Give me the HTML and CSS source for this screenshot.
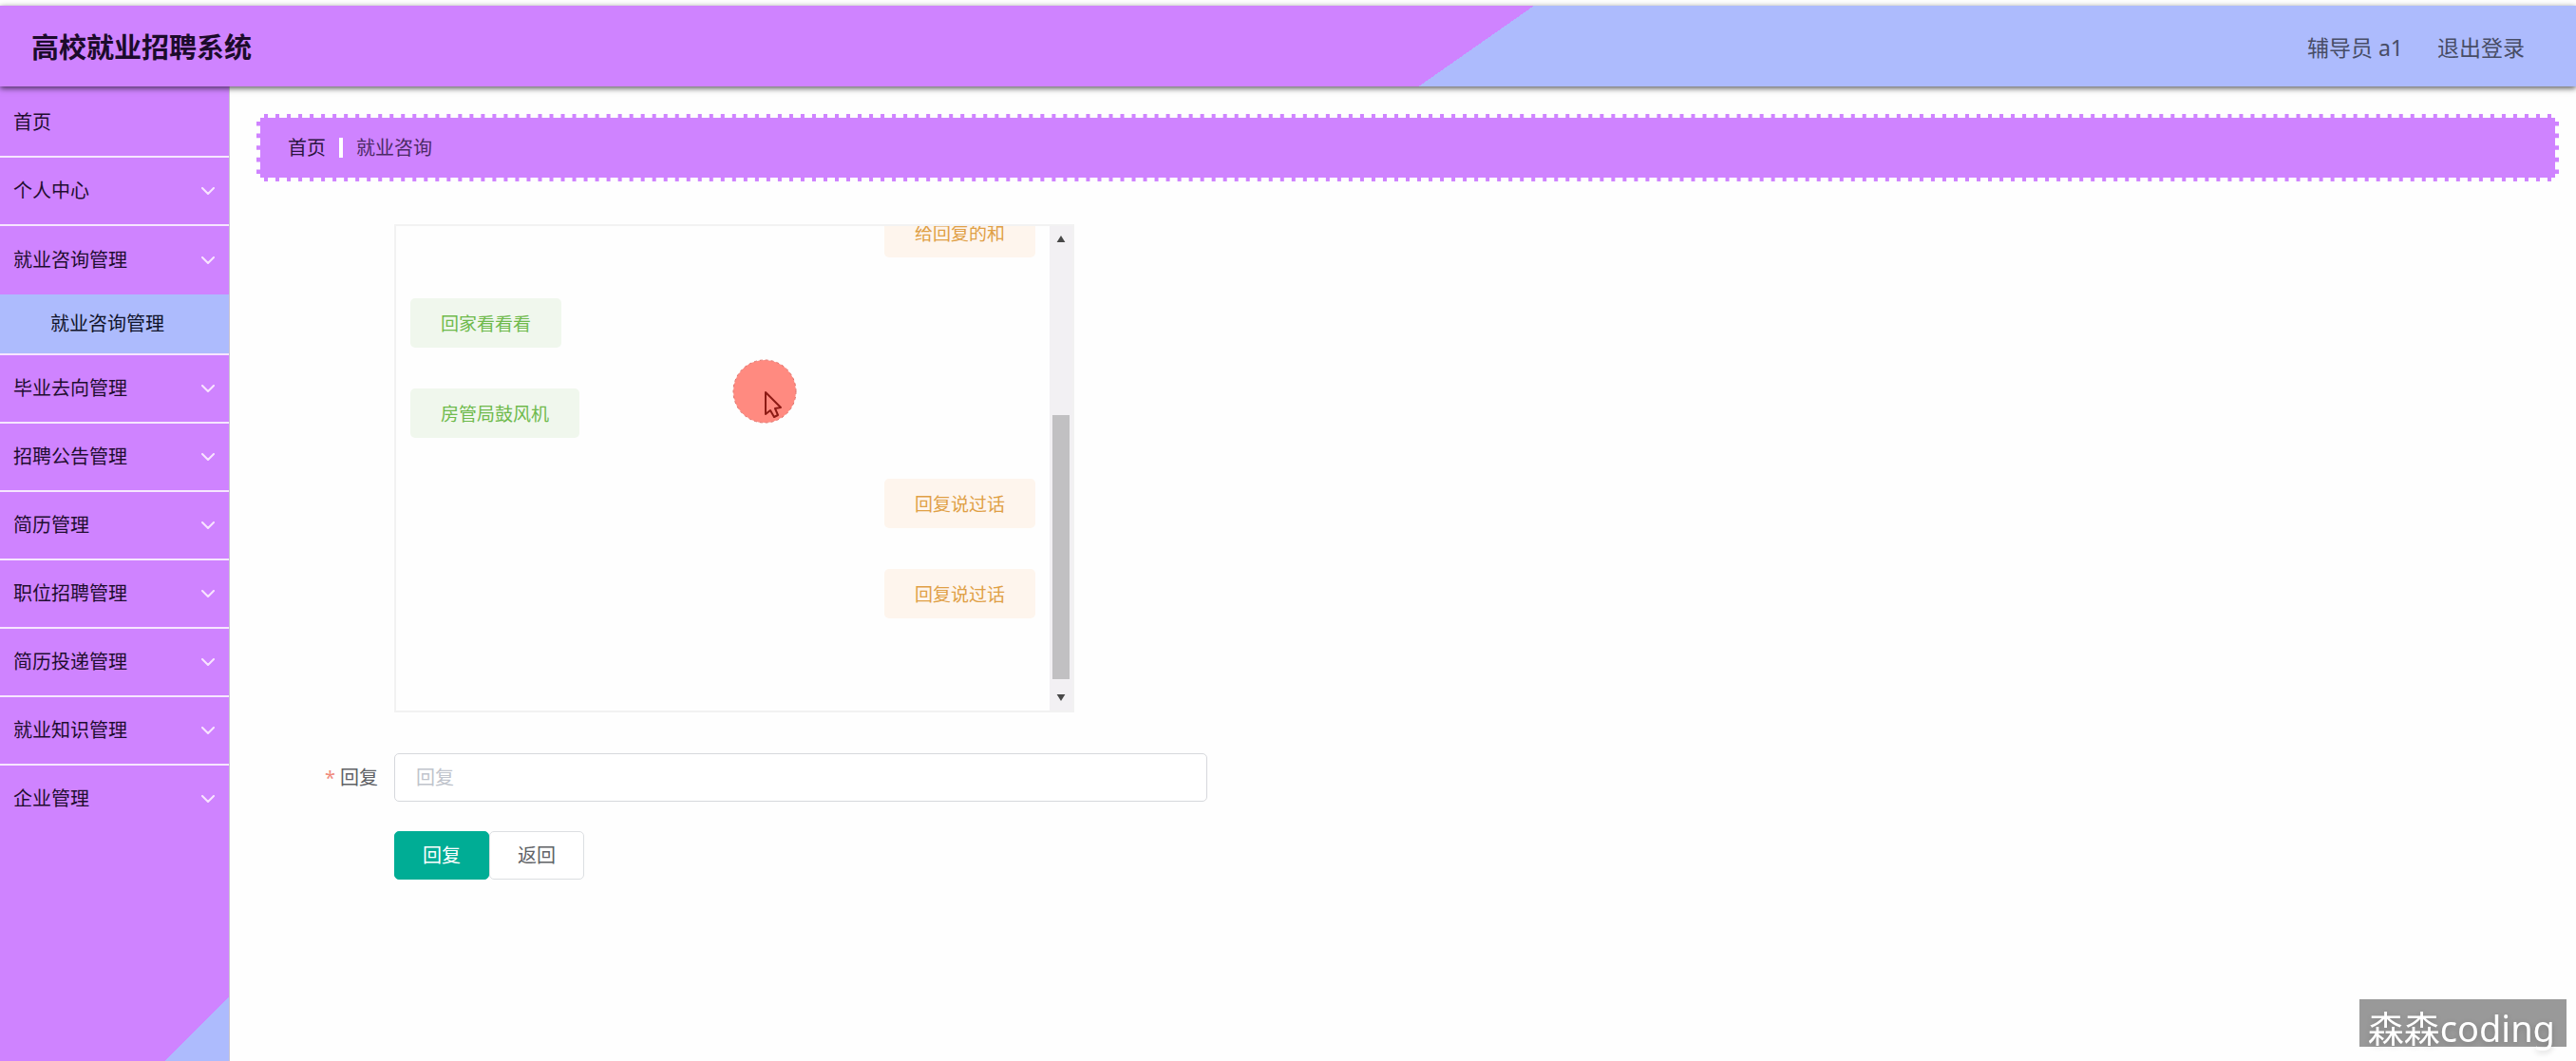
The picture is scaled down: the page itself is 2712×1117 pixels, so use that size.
FILE: index.html
```html
<!DOCTYPE html>
<html lang="zh-CN">
<head>
<meta charset="utf-8">
<meta name="viewport" content="width=device-width, initial-scale=1">
<title>高校就业招聘系统</title>
<link rel="stylesheet" href="styles.css">
</head>
<body>
<svg class="defs" aria-hidden="true">
  <symbol id="chevron" viewBox="0 0 14 8"><path d="M1 1l6 6 6-6" fill="none" stroke="currentColor" stroke-width="2" stroke-linecap="round" stroke-linejoin="round"/></symbol>
</svg>
<header class="header">
  <h1 class="header-title">高校就业招聘系统</h1>
  <div class="header-user">
    <span>辅导员 a1</span>
    <a class="header-link" href="#logout">退出登录</a>
  </div>
</header>
<div class="layout">
  <nav class="sidebar">
    <ul class="menu">
      <li class="menu-item"><a class="menu-link" href="#home">首页</a></li>
      <li class="menu-item"><a class="menu-link" href="#center">个人中心<svg class="menu-arrow"><use href="#chevron"/></svg></a></li>
      <li class="menu-item menu-open">
        <a class="menu-link" href="#consult">就业咨询管理<svg class="menu-arrow"><use href="#chevron"/></svg></a>
        <ul class="submenu">
          <li><a class="submenu-link" href="#consult-list">就业咨询管理</a></li>
        </ul>
      </li>
      <li class="menu-item"><a class="menu-link" href="#graduate">毕业去向管理<svg class="menu-arrow"><use href="#chevron"/></svg></a></li>
      <li class="menu-item"><a class="menu-link" href="#notice">招聘公告管理<svg class="menu-arrow"><use href="#chevron"/></svg></a></li>
      <li class="menu-item"><a class="menu-link" href="#resume">简历管理<svg class="menu-arrow"><use href="#chevron"/></svg></a></li>
      <li class="menu-item"><a class="menu-link" href="#jobs">职位招聘管理<svg class="menu-arrow"><use href="#chevron"/></svg></a></li>
      <li class="menu-item"><a class="menu-link" href="#delivery">简历投递管理<svg class="menu-arrow"><use href="#chevron"/></svg></a></li>
      <li class="menu-item"><a class="menu-link" href="#knowledge">就业知识管理<svg class="menu-arrow"><use href="#chevron"/></svg></a></li>
      <li class="menu-item"><a class="menu-link" href="#company">企业管理<svg class="menu-arrow"><use href="#chevron"/></svg></a></li>
    </ul>
  </nav>
  <main class="main">
    <div class="breadcrumb">
      <a class="breadcrumb-home" href="#home">首页</a>
      <span class="breadcrumb-divider"></span>
      <span class="breadcrumb-current">就业咨询</span>
    </div>
    <form class="reply-form">
      <div class="chat">
        <div class="chat-messages">
          <div class="bubble bubble-right">给回复的和</div>
          <div class="bubble bubble-left">回家看看看</div>
          <div class="bubble bubble-left">房管局鼓风机</div>
          <div class="bubble bubble-right">回复说过话</div>
          <div class="bubble bubble-right">回复说过话</div>
        </div>
        <div class="scrollbar" aria-hidden="true">
          <svg class="scroll-arrow" viewBox="0 0 10 8"><path d="M5 0l5 8H0z"/></svg>
          <div class="scroll-track"><div class="scroll-thumb"></div></div>
          <svg class="scroll-arrow" viewBox="0 0 10 8"><path d="M0 0h10L5 8z"/></svg>
        </div>
      </div>
      <label class="field-label" for="reply"><span class="required">*</span>回复</label>
      <input class="field-input" id="reply" type="text" placeholder="回复">
      <div class="actions">
        <button class="btn btn-primary" type="submit">回复</button>
        <button class="btn" type="button">返回</button>
      </div>
    </form>
  </main>
</div>
<svg class="pointer" viewBox="0 0 68 68" aria-hidden="true">
  <circle cx="34" cy="34" r="33" fill="#ff8a80" stroke="#e07068" stroke-dasharray="3 3"/>
  <path d="M35 35v23l5-4 4 7 4-2-3-7 6-1z" fill="#ff8a80" stroke="#8c1a14" stroke-width="2" stroke-linejoin="round"/>
</svg>
<div class="watermark">森森coding</div>
</body>
</html>
```
FILE: styles.css
```css
* {
  box-sizing: border-box;
}

body {
  display: flex;
  flex-direction: column;
  min-height: 100vh;
  margin: 0;
  padding-top: 6px;
  background: #fefefe;
  color: #303133;
  font-family: "Noto Sans", "Noto Sans CJK SC", sans-serif;
  font-size: 20px;
  line-height: 30px;
}

a {
  color: inherit;
  text-decoration: none;
}

ul {
  margin: 0;
  padding: 0;
  list-style: none;
}

.defs {
  display: none;
}

.header {
  position: relative;
  z-index: 1;
  display: flex;
  align-items: center;
  justify-content: space-between;
  height: 85px;
  padding: 2px 54px 0 33px;
  background: linear-gradient(145deg, #cf83ff 57%, #adbbfd 57%);
  box-shadow: 0 2px 6px rgba(0, 0, 0, 0.65);
}

.header-title {
  margin: 0;
  color: #1c0b2b;
  font-size: 29px;
  font-weight: 700;
}

.header-user {
  display: flex;
  gap: 36px;
  color: #484d66;
  font-size: 23px;
}

.layout {
  display: flex;
  flex: 1;
}

.sidebar {
  flex: none;
  width: 242px;
  padding-top: 3px;
  border-right: 1px solid #c9c4d0;
  background: linear-gradient(135deg, #cf83ff 848px, #adbbfd 848px);
  color: #1f0d30;
}

.menu-item {
  border-bottom: 2px solid #f6e6ff;
}

.menu-item:last-child {
  border-bottom: 0;
}

.menu-link {
  display: flex;
  align-items: center;
  justify-content: space-between;
  height: 70px;
  padding: 0 15px 0 14px;
}

.menu-arrow {
  width: 14px;
  height: 8px;
  color: #f8e4ff;
}

.menu-open .menu-link {
  height: 72px;
}

.submenu-link {
  display: flex;
  align-items: center;
  height: 62px;
  padding-left: 53px;
  background: #adbbfd;
  color: #10132a;
}

.main {
  flex: 1;
  padding: 29px 18px 40px 28px;
}

.breadcrumb {
  display: flex;
  align-items: center;
  height: 71px;
  padding: 0 29px;
  border: 4px dashed #fefefe;
  background: #cf83ff;
}

.breadcrumb-home {
  color: #2c1540;
}

.breadcrumb-divider {
  width: 4px;
  height: 21px;
  margin: 0 14px;
  background: #fff;
}

.breadcrumb-current {
  color: #4c2a66;
}

.reply-form {
  display: grid;
  grid-template-columns: 128px minmax(0, 856px);
  column-gap: 17px;
  padding-top: 45px;
}

.chat {
  display: flex;
  grid-column: 2;
  max-width: 716px;
  height: 514px;
  border: 2px solid #f2f2f2;
}

.chat-messages {
  display: flex;
  flex: 1;
  flex-direction: column;
  justify-content: flex-end;
  gap: 43px;
  padding: 0 15px 97px;
  overflow: hidden;
}

.bubble {
  flex: none;
  padding: 12px 32px 10px;
  border-radius: 5px;
  font-size: 19px;
}

.bubble-left {
  align-self: flex-start;
  background: #f0f7ed;
  color: #6fba4c;
}

.bubble-right {
  align-self: flex-end;
  background: #fef5ed;
  color: #e0a046;
}

.scrollbar {
  display: flex;
  flex-direction: column;
  align-items: center;
  width: 24px;
  padding: 10px 0;
  background: #f2f0f3;
}

.scroll-arrow {
  width: 10px;
  height: 7px;
  fill: #484848;
}

.scroll-track {
  display: flex;
  flex: 1;
  flex-direction: column;
  justify-content: flex-end;
  width: 18px;
  padding: 18px 0 16px;
}

.scroll-thumb {
  height: 63%;
  background: #c1c0c2;
}

.field-label {
  margin-top: 43px;
  color: #606266;
  line-height: 51px;
  text-align: right;
}

.required {
  margin-right: 5px;
  color: #f08a7c;
}

.field-input {
  width: 100%;
  height: 51px;
  margin-top: 43px;
  padding: 0 22px;
  border: 1px solid #d6d8dc;
  border-radius: 5px;
  background: #fff;
  color: #606266;
  font: inherit;
}

.field-input::placeholder {
  color: #c0c4cc;
}

.actions {
  display: flex;
  grid-column: 2;
  margin-top: 31px;
}

.btn {
  width: 100px;
  height: 51px;
  padding: 0;
  border: 1px solid #dcdfe2;
  border-radius: 5px;
  background: #fff;
  color: #606266;
  font: inherit;
}

.btn-primary {
  border-color: #00ad95;
  background: #00ad95;
  color: #fff;
}

/* Recorded mouse position, over the page */
.pointer {
  position: absolute;
  top: 378px;
  left: 771px;
  width: 68px;
  height: 68px;
}

.watermark {
  position: fixed;
  right: 10px;
  bottom: 15px;
  height: 50px;
  padding: 0 12px 0 9px;
  background: #999;
  color: #fff;
  font-size: 38px;
  line-height: 60px;
  text-shadow: 0 2px 6px rgba(0, 0, 0, 0.2);
}
```
